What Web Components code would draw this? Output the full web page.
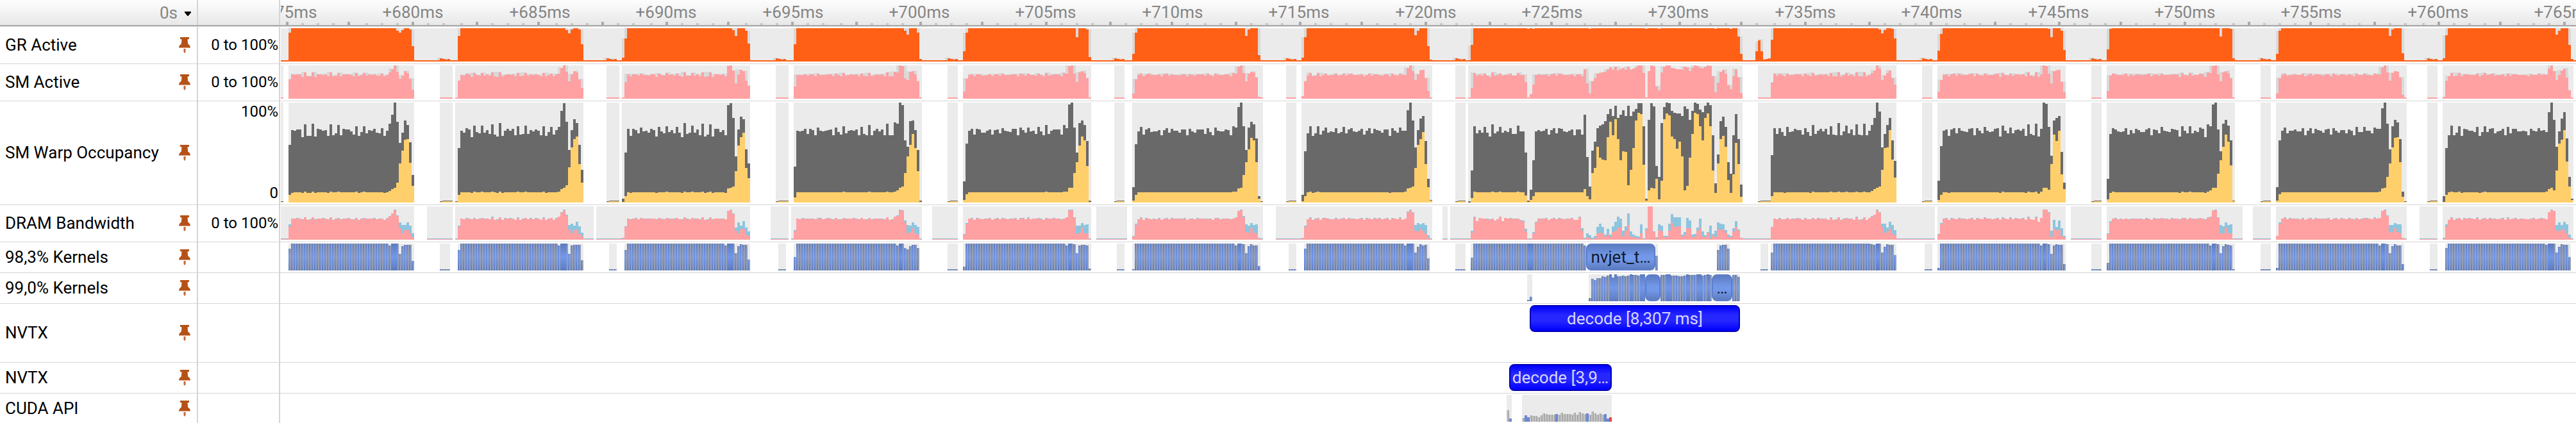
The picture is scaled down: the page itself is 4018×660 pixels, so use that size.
<!DOCTYPE html>
<html lang="en">
<head>
<meta charset="utf-8">
<title>GPU timeline</title>
<style>
  body {
    margin: 0;
    background: #fff;
    color: #000;
    font: 26px/32px Roboto, "Liberation Sans", sans-serif;
    overflow: hidden;
  }
</style>
</head>
<body>
<timeline-view></timeline-view>

<script>
// Every sample is one column of the timeline
const COL = 4;
const ORIGIN = 438;

const nums = (text) => (text ? text.trim().split(/[\s,]+/).map(Number) : []);
const pairs = (text) => text.trim().split(/\s+/).map((p) => p.split("/").map(Number));

// One decode step per entry. "warp" is the full profile, the other
// metrics only list what differs from the plateau: head | tail.
const STEPS = [
  {
    x: 450,
    warp: "90 113 112 114 114 102 122 104 104 123 103 115 114 112 113 104 122 105 108 121 105 115 114 114 111 106 119 104 110 119 108 113 112 115 109 108 116 104 112 123 137 156 126 93 109 128 121 94 43",
    active: "12 15|18 21 23 31 61 81 98 99 62 26",
    dram: "21/24|37/37 41/41 46/47 37/38 18/27 10/23 15/23 15/27 10/22 4/10",
    kern: "34|39 42 42 42 26 38 40 40 40 15",
    gr: "45|48 45 49 52 52 50 24",
  },
  {
    x: 714,
    warp: "85 112 109 116 114 102 120 110 108 120 109 113 107 122 106 103 124 104 112 115 112 115 105 119 106 107 120 107 113 111 114 112 105 119 104 110 118 106 113 118 143 155 126 82 113 130 124 90 51",
    active: "12|16 17 21 23 27 55 86 99 103 60 31",
    dram: "20/22|36/36 42/43 46/47 38/39 16/23 10/25 15/22 16/28 9/21 5/11",
    kern: "32|39 42 42 42 26 39 40 40 40 16",
    gr: "40|49 44 50 52 52 50 27",
  },
  {
    x: 970,
    warp: "6 78 115 104 115 113 108 117 111 112 109 115 113 103 118 111 108 119 110 113 108 118 109 102 124 107 109 120 109 114 105 123 103 106 122 103 115 115 110 113 105 152 155 132 72 114 134 130 83 61",
    active: "1 10|15 22 23 25 49 89 102 109 54 38",
    dram: "2/3 20/21|32/32 45/45 46/47 40/41 14/19 10/27 16/22 17/29 8/19 6/13",
    kern: "0 32|39 42 42 42 27 38 41 40 40 17",
    gr: "6 36|49 40 52 52 52 48 28",
  },
  {
    x: 1238,
    warp: "56 112 111 112 115 107 115 113 105 117 112 111 112 113 114 105 117 110 106 119 108 112 113 112 114 105 118 107 105 121 105 112 115 111 114 105 123 105 105 125 123 156 152 97 87 127 128 113 82 3",
    active: "8|17 19 23 25 46 72 90 107 85 49 1",
    dram: "13/15|36/36 37/38 46/47 45/46 27/30 10/23 12/22 18/27 10/23 8/20 1/2",
    kern: "21|39 42 42 35 33 38 40 40 35 0",
    gr: "27|48 42 52 52 52 45 4",
  },
  {
    x: 1502,
    warp: "33 92 112 115 106 115 114 109 109 112 114 106 113 114 108 116 112 111 110 115 115 105 117 113 109 117 111 112 107 118 111 105 121 107 112 114 114 114 106 121 116 153 156 117 78 124 128 121 96 3",
    active: "4 13|17 17 23 23 46 63 89 103 97 57 1",
    dram: "8/9 24/26|33/33 35/35 46/47 46/47 34/35 9/22 11/22 19/26 10/23 10/24 1/2",
    kern: "6|39 42 42 41 27 39 40 40 39 3",
    gr: "16 45|38 52 52 52 50 7",
  },
  {
    x: 1766,
    warp: "24 91 111 118 106 114 116 110 111 111 113 105 113 116 109 115 112 112 109 114 114 105 115 111 109 114 114 114 107 116 110 105 117 112 111 111 114 113 105 119 117 149 156 119 82 117 126 122 100 10 2",
    active: "3 12|17 17 22 23 43 63 83 101 97 63 6 1",
    dram: "5/6 23/25|33/33 35/35 45/45 46/47 35/37 12/24 11/22 18/26 11/23 10/24 2/3 1/2",
    kern: "2|39 42 42 41 27 38 41 39 39 7 0",
    gr: "12 45|40 50 52 52 52 10 2",
  },
  {
    x: 2030,
    warp: "12 80 108 119 104 108 119 106 112 117 109 111 110 116 108 110 118 108 114 116 111 110 112 115 106 112 116 108 115 113 112 109 114 114 104 116 112 109 117 112 112 144 156 128 86 113 131 135 96 37 4",
    active: "2 10|16 17 22 23 25 54 90 99 110 60 24 3",
    dram: "3/3 20/22|31/31 33/33 43/44 46/47 42/43 14/23 13/26 17/24 14/26 9/23 3/7 1/2",
    kern: "0 34|39 42 42 42 28 37 41 39 40 19 0",
    gr: "6 38|41 48 52 52 52 24 3",
  },
  {
    x: 2290,
    warp: "2 50 119 108 113 109 118 109 103 122 108 111 118 109 112 110 116 107 107 120 111 111 78 3 20 66 111 113 111 112 115 106 113 116 108 116 115 111 110 112 114 105 114 114 106 137 71 25 81 95 116 120 122 127 138 146 135 151 132 137 144 135 151 135 142 146 155 155 119 6 129 155 150 57 40 124 149 156 155 143 140 139 139 135 150 146 129 143 156 154 145 141 151 156 152 105 30 75 127 134 118 63 45 105 138 99 28",
    active: "0 7 17 16 16 16 16 16 16 17 16 16 17 16 16 16 16 16 16 17 16 16 11 1 4 10|16 21 10 5 46 54 87 70 67 66 102 126 105 130 99 66 80 79 27 51 85 128 140 138 59 3 19 23 22 37 5 34 130 139 136 103 99 84 95 72 19 26 70 107 140 138 119 97 132 139 119 50 15 61 99 104 87 35 15 44 93 60 9",
    dram: "1/2 11/14 35/36 29/29 34/34 33/33 33/33 32/33 31/32 33/33 30/30 32/32 36/36 29/29 34/34 33/33 33/34 33/33 32/33 33/33 31/31 28/30 13/17 1/2 1/2 10/12 27/28|31/31 35/36 14/18 1/3 4/10 2/7 1/3 2/6 10/20 11/25 10/20 5/8 8/17 4/8 12/21 14/28 19/36 19/33 5/14 14/21 23/41 5/13 4/8 3/6 2/5 10/24 1/2 15/18 52/52 52/52 12/13 2/4 15/24 13/22 4/6 4/6 14/25 26/40 20/35 20/35 21/35 5/8 7/12 18/34 18/30 4/8 5/9 14/19 19/33 5/13 4/7 11/12 2/22 7/9 4/14 16/27 15/25 16/24 11/15 4/8 4/6 13/18 20/29 14/16 3/3",
    kern: "0 20|39" + " 0".repeat(27) + " 23" + " 0".repeat(23) + " 32 39 40 40 34" + " 0".repeat(5),
    gr: "2 26" + " 52".repeat(21) + " 51 52 51|51" + " 52".repeat(21) + " 51" + " 52".repeat(4) + " 51" + " 52".repeat(21) + " 51" + " 52".repeat(5) + " 51 52 52 39 12",
  },
  {
    x: 2762,
    warp: "74 116 107 116 110 104 118 110 111 115 113 113 106 116 110 104 121 107 112 115 111 115 106 119 106 105 124 105 111 120 108 114 105 122 106 105 123 105 112 121 132 156 142 86 107 121 132 97 65",
    active: "10|16 18 21 23 25 51 85 86 113 67 39",
    dram: "20/20|34/34 36/37 39/39 46/47 42/43 20/25 10/25 13/19 17/28 10/23 7/15",
    kern: "28|41 40 42 42 28 37 41 40 40 24",
    gr: "34|50 44 49 52 52 51 36",
  },
  {
    x: 3022,
    warp: "34 88 112 114 104 114 116 108 116 112 111 110 115 116 105 116 112 108 118 112 110 111 115 116 103 120 112 108 117 108 113 114 112 115 104 122 107 105 123 103 115 156 154 118 73 128 132 135 79 31",
    active: "4 12|14 17 23 23 20 60 106 96 112 44 21",
    dram: "8/9 24/26|28/28 34/34 47/47 47/47 42/43 4/14 17/31 14/20 16/30 6/18 4/6",
    kern: "4|39 42 42 41 26 39 41 40 40 10",
    gr: "17 43|51 38 52 52 52 48 18",
  },
  {
    x: 3286,
    warp: "37 107 116 114 111 110 111 116 106 113 108 115 113 110 110 114 116 105 114 113 108 118 112 111 110 115 114 113 103 119 112 108 119 108 112 110 117 115 102 122 119 153 156 114 80 123 129 120 97 3",
    active: "5 15 17|19 23 23 45 66 87 106 95 58 2",
    dram: "9/10 27/29|35/36 46/46 46/47 34/35 10/23 10/21 19/27 10/23 10/24 1/2",
    kern: "12|39 42 42 41 27 38 41 40 39 2",
    gr: "19 51|39 52 52 52 51 5",
  },
  {
    x: 3550,
    warp: "24 97 112 117 108 112 112 114 111 111 116 105 112 116 108 115 113 112 109 114 115 106 116 112 109 113 113 108 114 112 105 118 110 110 118 112 112 108 117 115 115 147 156 123 83 119 129 125 99 17 2",
    active: "3 13|16 17 22 23 40 61 86 101 102 63 9 1",
    dram: "6/6 25/27|33/33 34/34 45/45 46/47 37/38 12/23 11/23 18/26 12/24 10/24 3/3 1/2",
    kern: "4|39 42 42 41 27 38 41 39 39 10 0",
    gr: "12 48|40 50 52 52 52 13 2",
  },
  {
    x: 3810,
    warp: "10 85 105 120 105 109 119 104 115 114 112 112 110 118 104 110 119 110 115 116 108 111 112 115 105 118 108 115 115 111 111 112 111 105 115 112 111 116 112 113 110 141 156 129 87 111 131 141 100 40 6",
    active: "1 12|16 17 21 23 19 50 92 98 113 64 25 4",
    dram: "2/3 21/24|32/32 43/43 46/47 45/45 15/23 13/27 16/23 15/28 10/24 3/8 1/2",
    kern: "0 35|40 42 42 42 28 37 41 40 40 21 0",
    gr: "5 41|42 48 52 52 52 26 4",
  },
];

// Short bursts between two steps: [from, to]
const BURSTS = [[438, 442], [686, 706], [710, 714], [946, 966], [1210, 1230], [1478, 1494], [1738, 1754], [2006, 2022], [2270, 2286], [2742, 2762], [2998, 3014], [3262, 3278], [3526, 3542], [3786, 3802]];
const KERNEL_BURSTS = [[686, 702], [950, 962], [1214, 1226], [1478, 1494], [1742, 1754], [2010, 2022], [2270, 2286], [2746, 2758], [3002, 3014], [3262, 3278], [3526, 3542], [3790, 3802]];
const DRAM_RANGES = [[438, 646], [666, 706], [710, 926], [930, 1170], [1202, 1230], [1234, 1438], [1454, 1494], [1502, 1702], [1710, 1758], [1766, 1970], [1990, 2234], [2250, 2258], [2262, 3018], [3022, 3222], [3230, 3278], [3286, 3498], [3514, 3542], [3550, 3754], [3774, 3802], [3810, 4014]];

// Expands "head|tail" to n columns, filling the plateau with fill(i)
function expand(spec, n, fill, parse = nums) {
  const [head, tail] = spec.split("|").map(parse);
  return Array.from({ length: n }, (_, i) => {
    if (i < head.length) return head[i];
    if (i >= n - tail.length) return tail[i - n + tail.length];
    return fill(i);
  });
}

// A layer is a Map of column x -> height
function buildData() {
  const d = {};
  for (const key of ["gr", "grPeak", "sm", "smPeak", "warp", "active", "dramRead", "dramWrite", "kern", "solid", "bgWarp", "bgDram", "bgKern"]) {
    d[key] = new Map();
  }
  const fillRange = (map, [from, to], value) => {
    for (let x = from; x < to; x += COL) map.set(x, value);
  };

  fillRange(d.gr, [ORIGIN, 4018], 2);
  for (const r of DRAM_RANGES) {
    fillRange(d.bgDram, r, 52);
    fillRange(d.dramRead, r, 1);
    fillRange(d.dramWrite, r, 2);
  }
  for (const r of BURSTS) {
    fillRange(d.bgWarp, r, 156);
    fillRange(d.sm, r, 2);
    fillRange(d.warp, r, 3);
    fillRange(d.active, r, 2);
    d.warp.set(r[0], 2);
    d.active.set(r[0], 1);
    if (r[1] - r[0] > COL) {
      [5, 4, 3, 4].forEach((h, i) => {
        d.gr.set(r[0] + i * COL, h);
        d.grPeak.set(r[0] + (i - 1) * COL, 6 - (i > 1));
      });
    }
  }
  for (const r of KERNEL_BURSTS) {
    fillRange(d.bgKern, r, 42);
    fillRange(d.kern, r, 2);
  }

  for (const step of STEPS) {
    const warp = nums(step.warp);
    const n = warp.length;
    const active = expand(step.active, n, (i) => (warp[i] >= 119 ? 17 : warp[i] <= 104 ? 15 : 16));
    const dram = expand(step.dram, n, (i) => {
      const h = Math.round(32.5 + (warp[i] - 112) * 0.2);
      return [h, h + ((i * 7) % 5 < 2 ? 1 : 0)];
    }, pairs);
    const kern = expand(step.kern, n, () => 42);
    const gr = expand(step.gr, n, () => 52);
    warp.forEach((h, i) => {
      const x = step.x + i * COL;
      d.bgWarp.set(x, 156);
      d.warp.set(x, h);
      d.sm.set(x, Math.max(2, Math.round(h / 3)));
      d.active.set(x, active[i]);
      d.dramRead.set(x, dram[i][0]);
      d.dramWrite.set(x, dram[i][1]);
      d.gr.set(x, gr[i]);
      if (gr[i] > 4) d.grPeak.set(x, Math.max(gr[i], gr[i - 1] ?? 0, gr[i + 1] ?? 0));
      if (kern[i]) {
        d.kern.set(x, kern[i]);
        d.bgKern.set(x, 42);
        if (kern[i] === 42 && (h > 125 || h < 67)) d.solid.set(x, 42);
      }
    });
  }

  // Isolated spike after the long step
  [16, 33, 16, 3, 4, 5].forEach((h, i) => d.gr.set(2738 + i * COL, h));
  [31, 35, 35].forEach((h, i) => d.grPeak.set(2738 + i * COL, h));
  d.grPeak.set(2290, 25);

  // Peaks are sampled at half the resolution
  for (const [x, h] of d.sm) {
    const mate = ((x - ORIGIN) / COL) % 2 ? x - COL : x + COL;
    if (h > 4) d.smPeak.set(x, Math.min(52, Math.max(h, d.sm.get(mate) ?? 0) + (h < 42 ? 1 : 0)));
  }
  return d;
}

const DATA = buildData();

const columns = (values, from) => new Map(values.map((h, i) => [from + i * COL, h]));
const merge = (...maps) => new Map(maps.flatMap((m) => [...m]));
const flat = (map, height) => new Map([...map.keys()].map((x) => [x, height]));
const pick = (map, keep) => new Map([...map].filter(([x, h]) => keep(x, h)));

// Second kernel stream
const DECODE_KERNELS = merge(
  columns([2, 7], 2382),
  columns(nums("5 35 33 36 36 39 38 40 42 37 42 39 39 40 39 40 42 41 41 40 42 42"), 2478),
  columns(nums("41 41 42 42 40 40 40 39 39 40 42 41 41 41 42 42 40 41 42 41"), 2590),
  columns([41, 41, 38], 2702)
);
const DECODE_SOLID = new Map(
  [...pick(DECODE_KERNELS, (x, h) => h === 42).keys()].flatMap((x) => [[x, 42], [x + COL, 42]])
);

const API_CALLS = merge(
  columns([18, 5], 2350),
  columns(nums("6 10 7 10 9 9 7 10 13 12 11 11 11 12 11 14 12 12 12 11 14 11 15 13 12 13 11 16 13 11 13 11 12 5 7"), 2374)
);
const API_MEMCPY = [2354, 2378, 2382, 2426, 2474, 2502, 2506];

// Layers are painted back to front, marks go over the stripes
const CHARTS = {
  gr: { height: 52, layers: [["#ebebeb", flat(DATA.gr, 52)], ["#d9d9d9", DATA.grPeak], ["#ff6016", DATA.gr]] },
  sm: { height: 52, layers: [["#ebebeb", flat(DATA.bgWarp, 52)], ["#d9d9d9", DATA.smPeak], ["#ffa0a2", DATA.sm]] },
  warp: { height: 156, layers: [["#ebebeb", DATA.bgWarp], ["#696969", DATA.warp], ["#ffcf6b", DATA.active]] },
  dram: { height: 52, layers: [["#ebebeb", DATA.bgDram], ["#8dc5df", DATA.dramWrite], ["#ffa0a2", DATA.dramRead]] },
  kernels: {
    height: 42,
    stripes: "#969fb8",
    solid: DATA.solid,
    layers: [["#ebebeb", DATA.bgKern], ["url(#fade)", DATA.kern]],
  },
  decode: {
    height: 42,
    stripes: "#969fb8",
    solid: DECODE_SOLID,
    layers: [["#ebebeb", flat(DECODE_KERNELS, 42)], ["url(#fade)", DECODE_KERNELS]],
  },
  api: {
    height: 42,
    stripes: "#a9a9a9",
    solid: new Map(),
    layers: [["#ebebeb", flat(API_CALLS, 42)], ["#c6c6c6", API_CALLS]],
    marks: [
      ["#6a8ad4", pick(API_CALLS, (x) => API_MEMCPY.includes(x))],
      ["#ff3b50", pick(API_CALLS, (x) => x === 2510)],
    ],
  },
};

function barPath(map, height, inset = 0) {
  let path = "";
  for (const [x, h] of map) {
    if (h > 0) path += `M${x - ORIGIN + inset} ${height}v${-h}h${COL - inset}v${h}z`;
  }
  return path;
}

class TimelineChart extends HTMLElement {
  constructor() {
    super();
    this.attachShadow({ mode: "open" });
  }

  connectedCallback() {
    const { height, layers, stripes, solid, marks = [] } = CHARTS[this.getAttribute("metric")];
    const paths = layers.map(([fill, map]) => `<path fill="${fill}" d="${barPath(map, height)}"/>`);
    if (stripes) {
      const top = layers[layers.length - 1][1];
      const striped = pick(top, (x) => !(solid.has(x) && solid.has(x + COL)));
      paths.push(`<path fill="${stripes}" d="${barPath(striped, height, 2)}"/>`);
    }
    for (const [fill, map] of marks) {
      paths.push(`<path fill="${fill}" d="${barPath(map, height)}"/>`);
    }

    this.shadowRoot.innerHTML = `
      <style>
        :host {
          display: block;
          overflow: hidden;
        }

        svg {
          display: block;
          width: 100%;
        }
      </style>
      <svg height="${height}" shape-rendering="crispEdges" aria-hidden="true">
        <linearGradient id="fade" gradientUnits="userSpaceOnUse" x1="0" y1="0" x2="0" y2="${height}">
          <stop offset="0" stop-color="#5d7cc0"/>
          <stop offset=".5" stop-color="#7298ea"/>
          <stop offset="1" stop-color="#5d7cc0"/>
        </linearGradient>
        ${paths.join("")}
      </svg>
    `;
  }
}

class TimelineEvent extends HTMLElement {
  constructor() {
    super();
    this.attachShadow({ mode: "open" });
  }

  connectedCallback() {
    const start = Number(this.getAttribute("start"));
    const end = Number(this.getAttribute("end"));
    this.style.left = `${start - ORIGIN}px`;
    this.style.width = `${end - start}px`;

    this.shadowRoot.innerHTML = `
      <style>
        :host {
          position: absolute;
          top: 0;
          box-sizing: border-box;
          height: 42px;
          padding: 3px 0;
          border: 2px solid #0000b4;
          border-radius: 8px;
          background: linear-gradient(#00f, #2626ff 35%, #2626ff 60%, #00f);
          color: #d6d6ff;
          line-height: 32px;
          text-align: center;
          white-space: nowrap;
          overflow: hidden;
        }

        :host([kind="kernel"]) {
          border-color: #5f80c8;
          background: linear-gradient(#5d7cc0, #7298ea 45%, #7298ea 60%, #5d7cc0);
          color: #121a2c;
        }
      </style>
      <slot></slot>
    `;
  }
}

class PinButton extends HTMLElement {
  constructor() {
    super();
    this.attachShadow({ mode: "open" });
    this.shadowRoot.innerHTML = `
      <style>
        :host {
          display: block;
        }

        button {
          display: block;
          padding: 0;
          border: 0;
          background: none;
        }

        svg {
          display: block;
        }
      </style>
      <button type="button" aria-label="Unpin row">
        <svg width="18" height="26" viewBox="0 0 18 26" fill="#b55117">
          <path d="M2 1.5Q2 1 2.500 1H15.500Q16 1 16 1.500V3.500Q16 4 15.500 4L13.500 4.500L14.200 11.500Q17.800 13.500 18 17.500H0Q.2 13.500 3.800 11.500L4.500 4.500L2.500 4Q2 4 2 3.500Z"/>
          <path d="M7.500 19H10.500V24L9.500 25.500H8.500L7.500 24Z" opacity=".85"/>
        </svg>
      </button>
    `;
  }
}

class TimelineRow extends HTMLElement {
  constructor() {
    super();
    this.attachShadow({ mode: "open" });
  }

  connectedCallback() {
    const range = (this.getAttribute("range") ?? "").split("|").filter(Boolean);

    this.shadowRoot.innerHTML = `
      <style>
        :host {
          display: grid;
          grid-template-columns: 309px 128px minmax(0, 1fr);
          box-sizing: border-box;
          min-height: 48px;
          border-bottom: 1px solid #d5d5d5;
        }

        :host([size="tall"]) {
          min-height: 92px;
        }

        .name,
        .range {
          display: flex;
          align-items: center;
          justify-content: space-between;
          border-right: 2px solid #d5d5d5;
        }

        .name {
          padding: 0 10px 2px 8px;
        }

        .range {
          flex-direction: column;
          align-items: flex-end;
          justify-content: ${range.length > 1 ? "space-between" : "center"};
          padding: 0 1px 2px 0;
          font-size: 24px;
        }

        .lane {
          position: relative;
          margin: 2px 0 3px 1px;
          overflow: hidden;
        }
      </style>
      <div class="name">
        <span>${this.getAttribute("label")}</span>
        <pin-button></pin-button>
      </div>
      <div class="range">${range.map((text) => `<span>${text}</span>`).join("")}</div>
      <div class="lane"><slot></slot></div>
    `;
  }
}

class TimelineRuler extends HTMLElement {
  constructor() {
    super();
    this.attachShadow({ mode: "open" });
  }

  connectedCallback() {
    const labelStep = 197.4;
    const first = 447 - ORIGIN;
    let marks = "";
    for (let i = 0; i < 146; i++) {
      const x = COL * Math.round((first + (i * labelStep) / 8 - 2) / COL);
      const major = i % 4 === 0;
      marks += `<rect x="${x}" y="${major ? 34 : 36}" width="4" height="${major ? 5 : 3}" fill="${major ? "#a9a9a9" : "#c8c8c8"}"/>`;
    }
    for (let i = 0; i <= 18; i++) {
      marks += `<text x="${Math.round(first + i * labelStep)}" y="28">+${675 + i * 5}ms</text>`;
    }

    this.shadowRoot.innerHTML = `
      <style>
        :host {
          display: grid;
          grid-template-columns: 309px 128px minmax(0, 1fr);
          background: linear-gradient(#fdfdfd, #e8e8e8);
          border-bottom: 2px solid #a9a9a9;
          box-shadow: 0 1px #e2e2e2;
          margin-bottom: 1px;
          color: #858585;
        }

        .unit,
        .gap {
          display: flex;
          align-items: center;
          justify-content: flex-end;
          gap: 11px;
          border-right: 2px solid #d5d5d5;
        }

        .unit {
          padding-right: 9px;
        }

        select {
          appearance: none;
          width: 48px;
          padding: 0;
          border: 0;
          background: none;
          color: inherit;
          font: inherit;
          text-align-last: right;
        }

        .unit svg {
          margin-top: 4px;
        }

        .ticks {
          display: block;
          width: calc(100% - 1px);
          height: 39px;
          margin-left: 1px;
          overflow: hidden;
        }

        text {
          fill: #858585;
          text-anchor: middle;
        }
      </style>
      <div class="unit">
        <select aria-label="Time origin"><option>0s</option></select>
        <svg width="10" height="7" aria-hidden="true"><path d="M0 0H10V1.500L5.500 7H4.500L0 1.500Z" fill="#000"/></svg>
      </div>
      <div class="gap"></div>
      <svg class="ticks">${marks}</svg>
    `;
  }
}

class TimelineView extends HTMLElement {
  constructor() {
    super();
    this.attachShadow({ mode: "open" });
    this.shadowRoot.innerHTML = `
      <style>
        :host {
          display: block;
        }
      </style>
      <timeline-ruler></timeline-ruler>
      <timeline-row label="GR Active" range="0 to 100%"><timeline-chart metric="gr"></timeline-chart></timeline-row>
      <timeline-row label="SM Active" range="0 to 100%"><timeline-chart metric="sm"></timeline-chart></timeline-row>
      <timeline-row label="SM Warp Occupancy" range="100%|0"><timeline-chart metric="warp"></timeline-chart></timeline-row>
      <timeline-row label="DRAM Bandwidth" range="0 to 100%"><timeline-chart metric="dram"></timeline-chart></timeline-row>
      <timeline-row label="98,3% Kernels">
        <timeline-chart metric="kernels"></timeline-chart>
        <timeline-event kind="kernel" start="2474" end="2582">nvjet_t…</timeline-event>
      </timeline-row>
      <timeline-row label="99,0% Kernels">
        <timeline-chart metric="decode"></timeline-chart>
        <timeline-event kind="kernel" start="2566" end="2590"></timeline-event>
        <timeline-event kind="kernel" start="2670" end="2702">…</timeline-event>
      </timeline-row>
      <timeline-row label="NVTX" size="tall">
        <timeline-event start="2386" end="2714">decode [8,307 ms]</timeline-event>
      </timeline-row>
      <timeline-row label="NVTX">
        <timeline-event start="2354" end="2514">decode [3,9…</timeline-event>
      </timeline-row>
      <timeline-row label="CUDA API"><timeline-chart metric="api"></timeline-chart></timeline-row>
    `;
  }
}

customElements.define("timeline-chart", TimelineChart);
customElements.define("timeline-event", TimelineEvent);
customElements.define("pin-button", PinButton);
customElements.define("timeline-row", TimelineRow);
customElements.define("timeline-ruler", TimelineRuler);
customElements.define("timeline-view", TimelineView);
</script>
</body>
</html>
